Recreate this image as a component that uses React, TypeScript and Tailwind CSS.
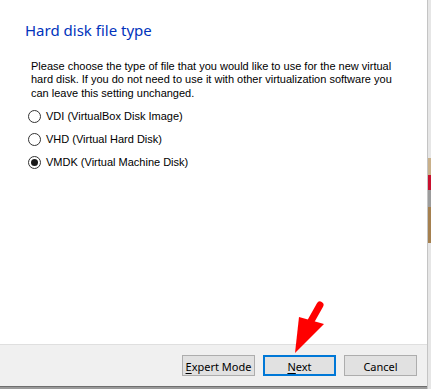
import React from 'react';

const options = [
  { id: 'vdi', label: 'VDI (VirtualBox Disk Image)' },
  { id: 'vhd', label: 'VHD (Virtual Hard Disk)' },
  { id: 'vmdk', label: 'VMDK (Virtual Machine Disk)' },
];

const Radio = ({ checked, label }: { checked: boolean; label: string }) => (
  <div className="flex items-center h-[23px]">
    <span className="w-[13px] h-[13px] rounded-full border border-[#333333] bg-white flex items-center justify-center">
      {checked && <span className="w-[7px] h-[7px] rounded-full bg-[#1a1a1a]" />}
    </span>
    <span className="ml-[5px] text-[11px] text-black">{label}</span>
  </div>
);

const WinButton = ({ children, primary }: { children: React.ReactNode; primary?: boolean }) => (
  <button
    className={`w-[73px] h-[21px] bg-[#e1e1e1] text-[11px] leading-none text-black flex items-center justify-center ${
      primary ? 'border-2 border-[#0078d7]' : 'border border-[#adadad]'
    }`}
  >
    <span className="whitespace-nowrap pt-px">{children}</span>
  </button>
);

export default function App() {
  const selected = 'vmdk';

  return (
    <div className="relative w-[431px] h-[389px] flex overflow-hidden bg-[#e6e6e6] font-['Noto_Sans',sans-serif]">
      <div className="w-[427px] flex flex-col">
        <div className="h-[344px] bg-white pt-[20px]">
          <h1 className="ml-[25px] text-[15px] leading-[20px] text-[#0033bc]">Hard disk file type</h1>
          <p className="ml-[31px] mt-[20px] w-[380px] text-[11px] leading-[13.4px] text-black font-['Liberation_Sans',sans-serif]">
            Please choose the type of file that you would like to use for the new virtual hard disk. If you do not
            need to use it with other virtualization software you can leave this setting unchanged.
          </p>
          <div className="ml-[28px] mt-[5px] flex flex-col font-['Liberation_Sans',sans-serif]">
            {options.map((o) => (
              <Radio key={o.id} checked={o.id === selected} label={o.label} />
            ))}
          </div>
        </div>
        <div className="h-[42px] bg-[#f0f0f0] border-t border-[#dfdfdf] flex items-center justify-end gap-[8px] pr-[10px]">
          <WinButton>
            <span className="underline underline-offset-2">E</span>xpert Mode
          </WinButton>
          <WinButton primary>
            <span className="underline underline-offset-2">N</span>ext
          </WinButton>
          <WinButton>Cancel</WinButton>
        </div>
        <div className="flex-1 border-t border-[#6e6e6e] bg-[#9a9a9a]" />
      </div>
      <div className="w-px bg-[#c4c4c4]" />
      <div className="flex-1 flex flex-col">
        <div className="h-[158px]" />
        <div className="h-[17px] bg-[#c9b08a]" />
        <div className="h-[15px] bg-[#c8102e]" />
        <div className="h-[17px] bg-[#9c9c9c]" />
        <div className="h-[36px] bg-[#a5804f]" />
      </div>

      <svg className="absolute inset-0 pointer-events-none" width="431" height="389" viewBox="0 0 431 389">
        <line x1="311" y1="321" x2="320" y2="305" stroke="#ff0000" strokeWidth="7" strokeLinecap="round" />
        <polygon points="295,353 299,317 324,324" fill="#ff0000" />
      </svg>
    </div>
  );
}
